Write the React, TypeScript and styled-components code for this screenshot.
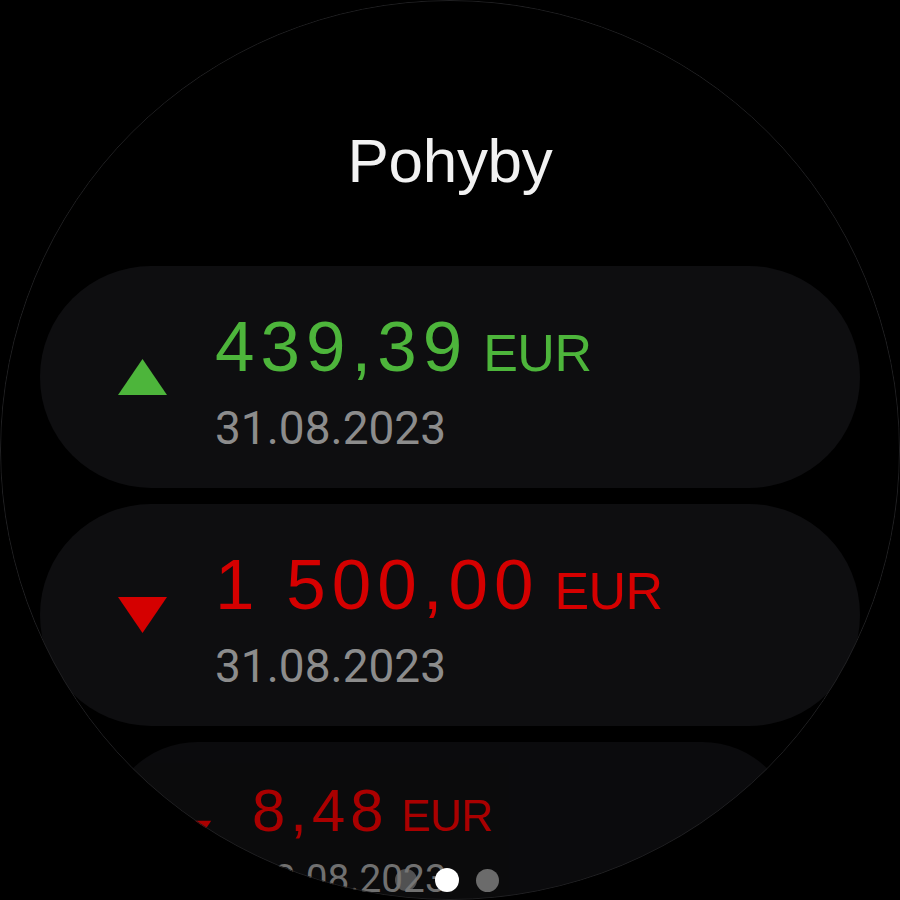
import React from "react";
import styled, { createGlobalStyle } from "styled-components";

const GlobalStyle = createGlobalStyle`
  html, body {
    margin: 0;
    padding: 0;
    background: #000;
  }
  * { box-sizing: border-box; }
`;

const Screen = styled.div`
  position: relative;
  width: 900px;
  height: 900px;
  border-radius: 50%;
  overflow: hidden;
  background: #000;
  display: flex;
  flex-direction: column;
  align-items: center;
  padding-top: 125px;

  &::after {
    content: "";
    position: absolute;
    inset: 0;
    border-radius: 50%;
    border: 1px solid #202022;
    pointer-events: none;
  }
`;

const Title = styled.h1`
  margin: 0 0 69px 0;
  height: 72px;
  font-family: "Liberation Sans", Arial, sans-serif;
  font-weight: 400;
  font-size: 62px;
  line-height: 72px;
  color: #f2f2f2;
  letter-spacing: -0.3px;
`;

const List = styled.div`
  display: flex;
  flex-direction: column;
  gap: 16px;
  width: 820px;
`;

const Card = styled.div<{ $scale?: number; $dim?: boolean }>`
  flex: none;
  display: flex;
  align-items: center;
  gap: 48px;
  height: 222px;
  width: 820px;
  padding-left: 78px;
  border-radius: 111px;
  background: #0e0e10;
  transform: scale(${(p) => p.$scale ?? 1});
  transform-origin: top center;
  opacity: ${(p) => (p.$dim ? 0.8 : 1)};
`;

const Arrow = styled.svg`
  flex: none;
  width: 49px;
  height: 36px;
  display: block;
`;

const Texts = styled.div`
  display: flex;
  flex-direction: column;
  padding-top: 8px;
`;

const Amount = styled.div<{ $color: string }>`
  font-family: "Liberation Sans", Arial, sans-serif;
  font-size: 71px;
  line-height: 80px;
  height: 80px;
  letter-spacing: 6px;
  color: ${(p) => p.$color};
  white-space: nowrap;
`;

const Unit = styled.span`
  font-size: 52px;
  letter-spacing: -0.5px;
  margin-left: 15px;
`;

const DateText = styled.div`
  margin-top: 13px;
  font-family: Roboto, "Liberation Sans", sans-serif;
  font-size: 46px;
  line-height: 56px;
  height: 56px;
  color: #8c8c8c;
  white-space: nowrap;
`;

const Dots = styled.div`
  position: absolute;
  top: 868px;
  left: 0;
  right: 0;
  height: 24px;
  display: flex;
  justify-content: center;
  align-items: center;
  gap: 17.5px;
  padding-right: 6px;
`;

const Dot = styled.span<{ $color: string; $size: number }>`
  width: ${(p) => p.$size}px;
  height: ${(p) => p.$size}px;
  border-radius: 50%;
  background: ${(p) => p.$color};
`;

const GREEN = "#4db53b";
const RED = "#d50000";

type Item = {
  amount: string;
  date: string;
  up: boolean;
  scale?: number;
  dim?: boolean;
};

const items: Item[] = [
  { amount: "439,39", date: "31.08.2023", up: true },
  { amount: "1 500,00", date: "31.08.2023", up: false },
  { amount: "8,48", date: "30.08.2023", up: false, scale: 0.843, dim: true },
];

function TriangleIcon({ up }: { up: boolean }) {
  return (
    <Arrow viewBox="0 0 49 36">
      {up ? (
        <polygon points="24.5,0 49,36 0,36" fill={GREEN} />
      ) : (
        <polygon points="0,0 49,0 24.5,36" fill={RED} />
      )}
    </Arrow>
  );
}

export default function App() {
  return (
    <>
      <GlobalStyle />
      <Screen>
        <Title>Pohyby</Title>
        <List>
          {items.map((it, i) => (
            <Card key={i} $scale={it.scale} $dim={it.dim}>
              <TriangleIcon up={it.up} />
              <Texts>
                <Amount $color={it.up ? GREEN : RED}>
                  {it.amount}
                  <Unit>EUR</Unit>
                </Amount>
                <DateText>{it.date}</DateText>
              </Texts>
            </Card>
          ))}
        </List>
        <Dots>
          <Dot $color="rgba(120,120,120,0.65)" $size={22} />
          <Dot $color="#ffffff" $size={24} />
          <Dot $color="#6b6b6b" $size={23} />
        </Dots>
      </Screen>
    </>
  );
}
